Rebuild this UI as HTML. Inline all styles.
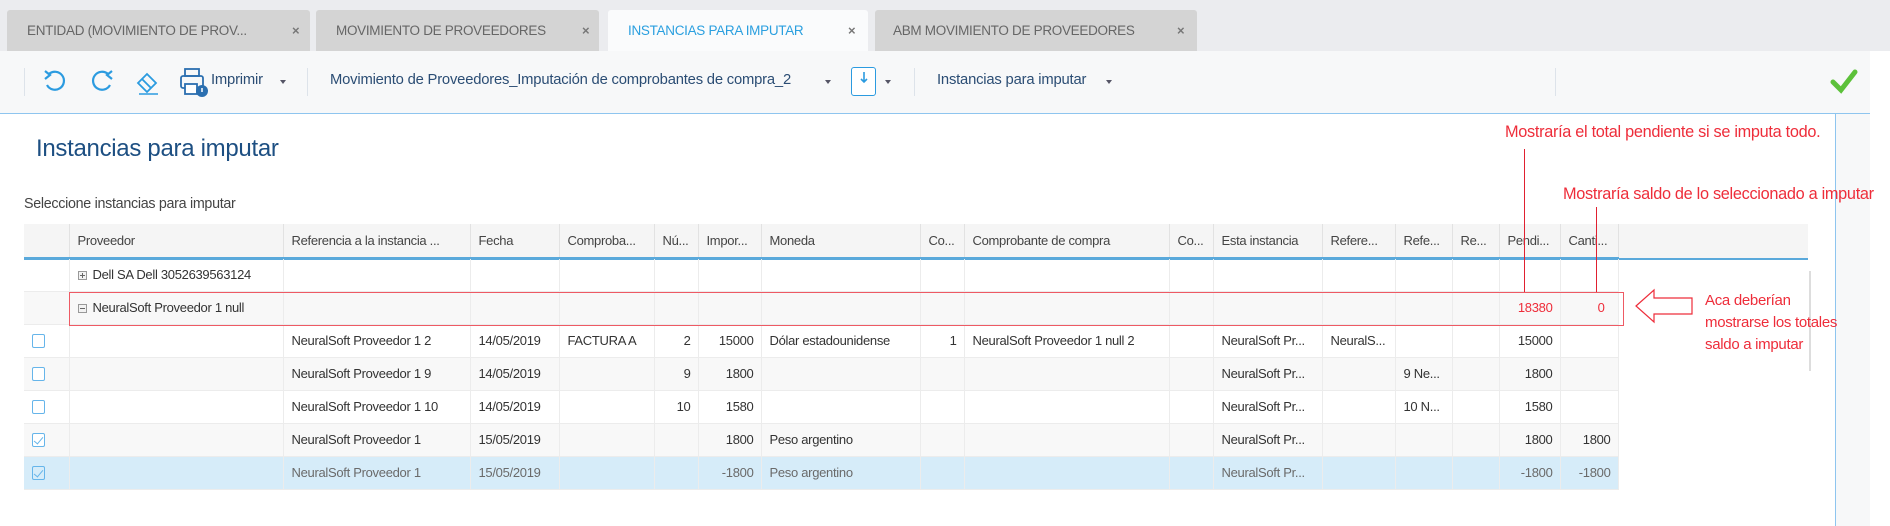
<!DOCTYPE html>
<html><head><meta charset="utf-8"><style>
*{margin:0;padding:0;box-sizing:border-box}
body{width:1890px;height:526px;background:#fff;font-family:"Liberation Sans",sans-serif;position:relative;overflow:hidden;color:#333}
.a{position:absolute;white-space:nowrap}
.tab{position:absolute;top:10px;height:41px;background:#d4d4d4;border-radius:3px 3px 0 0;font-size:13.5px;color:#666;letter-spacing:-0.3px}
.tab span{position:absolute;top:13px}
.x{font-size:13px;font-weight:bold;color:#777}
.sep{position:absolute;top:68px;width:1px;height:28px;background:#dde3ea}
.tb{font-size:14.8px;color:#2b4d74;letter-spacing:-0.2px;top:72px}
.car{position:absolute;top:80px;width:0;height:0;border-left:3.5px solid transparent;border-right:3.5px solid transparent;border-top:4px solid #556}
table{position:absolute;left:24px;top:224px;border-collapse:collapse;table-layout:fixed;width:1594px;font-size:13px;letter-spacing:-0.3px}
td{border-right:1px solid #ececec;border-bottom:1px solid #ececec;height:33px;padding:0 8px;overflow:hidden;white-space:nowrap;text-overflow:ellipsis;color:#333}
thead td{height:34px;background:#f5f5f5;color:#444;border-bottom:2px solid #5aa9db;border-right:1px solid #e2e2e2}
td.r{text-align:right;padding-right:7px}
tr.g td{background:#f8f8f8}
tr.s td{background:#d6ecf9;color:#6a6a6a}
.cb{display:inline-block;width:13px;height:14px;border:1.5px solid #66b5ea;border-radius:2px;vertical-align:middle;position:relative;background:#fff}
tr.s .cb{background:#d6ecf9}
.cb.c::after{content:"";position:absolute;left:3px;top:1px;width:4px;height:8px;border-right:1.5px solid #66b5ea;border-bottom:1.5px solid #66b5ea;transform:rotate(40deg)}
.ex{display:inline-block;width:9px;height:9px;border:1px solid #999;margin-right:6px;position:relative;vertical-align:-1px;background:#f2f2f2}
.ex::before{content:"";position:absolute;left:1px;top:3px;width:5px;height:1px;background:#666}
.ex.p::after{content:"";position:absolute;left:3px;top:1px;width:1px;height:5px;background:#666}
.red{color:#ee2d3a;font-size:16.3px;letter-spacing:-0.3px}
</style></head><body>
<div class="a" style="left:0;top:0;width:1890px;height:51px;background:#ebecef"></div>
<div class="tab" style="left:7px;width:303px"><span style="left:20px">ENTIDAD (MOVIMIENTO DE PROV...</span><span class="x" style="left:285px">×</span></div>
<div class="tab" style="left:316px;width:283px"><span style="left:20px">MOVIMIENTO DE PROVEEDORES</span><span class="x" style="left:266px">×</span></div>
<div class="tab" style="left:608px;width:260px;background:#fafbfc"><span style="left:20px;color:#2a9fdf">INSTANCIAS PARA IMPUTAR</span><span class="x" style="left:240px">×</span></div>
<div class="tab" style="left:875px;width:322px"><span style="left:18px">ABM MOVIMIENTO DE PROVEEDORES</span><span class="x" style="left:302px">×</span></div>
<div class="a" style="left:0;top:51px;width:1870px;height:63px;background:#f7f8f9;border-bottom:1.5px solid #8ec5ef"></div>
<div class="sep" style="left:24px"></div>
<svg class="a" style="left:42px;top:68px" width="26" height="28" viewBox="0 0 26 28"><path d="M7 6 A9 9 0 1 1 5 17" fill="none" stroke="#2b9be0" stroke-width="2.2"/><path d="M3 3 L8 7 L3 11" fill="none" stroke="#2b9be0" stroke-width="2.2"/></svg>
<svg class="a" style="left:89px;top:68px" width="26" height="28" viewBox="0 0 26 28"><path d="M19 6 A9 9 0 1 0 21 17" fill="none" stroke="#2b9be0" stroke-width="2.2"/><path d="M23 3 L18 7 L23 11" fill="none" stroke="#2b9be0" stroke-width="2.2"/></svg>
<svg class="a" style="left:134px;top:68px" width="28" height="28" viewBox="0 0 28 28"><path d="M4 15 L13 6 L22 15 L13 24 Z M8 11 L17 20" fill="none" stroke="#2b9be0" stroke-width="1.8"/><path d="M5 26 H24" stroke="#2b9be0" stroke-width="1.5"/></svg>
<svg class="a" style="left:178px;top:67px" width="32" height="30" viewBox="0 0 32 30"><rect x="7" y="2" width="14" height="7" fill="none" stroke="#2b6fb0" stroke-width="1.8"/><rect x="3" y="9" width="22" height="12" rx="2" fill="none" stroke="#2b6fb0" stroke-width="1.8"/><rect x="7" y="17" width="12" height="10" fill="#fff" stroke="#2b6fb0" stroke-width="1.8"/><circle cx="24" cy="24" r="6" fill="#2b6fb0"/><path d="M24 21 V25" stroke="#fff" stroke-width="1.5"/></svg>
<div class="a tb" style="left:211px">Imprimir</div><div class="car" style="left:280px"></div>
<div class="sep" style="left:307px"></div>
<div class="a tb" style="left:330px">Movimiento de Proveedores_Imputación de comprobantes de compra_2</div><div class="car" style="left:825px"></div>
<div class="a" style="left:851px;top:67px;width:25px;height:29px;border:1.5px solid #2b9be0;border-radius:3px;background:#fff"></div>
<svg class="a" style="left:857px;top:71px" width="14" height="16"><path d="M7 1 V11 M4 8 L7 11 L10 8" fill="none" stroke="#2b9be0" stroke-width="1.6"/></svg>
<div class="car" style="left:885px"></div>
<div class="sep" style="left:914px"></div>
<div class="a tb" style="left:937px">Instancias para imputar</div><div class="car" style="left:1106px"></div>
<div class="sep" style="left:1555px"></div>
<svg class="a" style="left:1830px;top:68px" width="28" height="26"><path d="M3 14 L11 22 L25 4" fill="none" stroke="#5cc13a" stroke-width="5" stroke-linecap="round"/></svg>
<div class="a" style="left:1835px;top:114px;width:1px;height:412px;background:#8ec5ef"></div>
<div class="a" style="left:1836px;top:114px;width:34px;height:412px;background:#f7f8f9"></div>
<div class="a" style="left:36px;top:135px;font-size:24px;color:#1d4f82;letter-spacing:-0.3px">Instancias para imputar</div>
<div class="a" style="left:24px;top:196px;font-size:14.3px;color:#444;letter-spacing:-0.3px">Seleccione instancias para imputar</div>
<div class="a" style="left:24px;top:224px;width:1784px;height:36px;background:#f5f5f5;border-bottom:2px solid #5aa9db"></div>
<div class="a" style="left:1809px;top:271px;width:2px;height:100px;background:#ddd"></div>
<table>
<colgroup><col style="width:45px"><col style="width:214px"><col style="width:187px"><col style="width:89px"><col style="width:95px"><col style="width:44px"><col style="width:63px"><col style="width:159px"><col style="width:44px"><col style="width:205px"><col style="width:44px"><col style="width:109px"><col style="width:73px"><col style="width:57px"><col style="width:47px"><col style="width:61px"><col style="width:58px"></colgroup>
<thead><tr><td></td><td>Proveedor</td><td>Referencia a la instancia ...</td><td>Fecha</td><td>Comproba...</td><td>Nú...</td><td>Impor...</td><td>Moneda</td><td>Co...</td><td>Comprobante de compra</td><td>Co...</td><td>Esta instancia</td><td>Refere...</td><td>Refe...</td><td>Re...</td><td>Pendi...</td><td>Canti...</td></tr></thead>
<tbody>
<tr><td></td><td><span class="ex p"></span>Dell SA Dell 3052639563124</td><td></td><td></td><td></td><td></td><td></td><td></td><td></td><td></td><td></td><td></td><td></td><td></td><td></td><td></td><td></td></tr>
<tr class="g"><td></td><td><span class="ex"></span>NeuralSoft Proveedor 1 null</td><td></td><td></td><td></td><td></td><td></td><td></td><td></td><td></td><td></td><td></td><td></td><td></td><td></td><td class="r" style="color:#ee2d3a">18380</td><td class="r" style="color:#ee2d3a;padding-right:13px">0</td></tr>
<tr><td><span class="cb"></span></td><td></td><td>NeuralSoft Proveedor 1 2</td><td>14/05/2019</td><td>FACTURA A</td><td class="r">2</td><td class="r">15000</td><td>Dólar estadounidense</td><td class="r">1</td><td>NeuralSoft Proveedor 1 null 2</td><td></td><td>NeuralSoft Pr...</td><td>NeuralS...</td><td></td><td></td><td class="r">15000</td><td></td></tr>
<tr class="g"><td><span class="cb"></span></td><td></td><td>NeuralSoft Proveedor 1 9</td><td>14/05/2019</td><td></td><td class="r">9</td><td class="r">1800</td><td></td><td></td><td></td><td></td><td>NeuralSoft Pr...</td><td></td><td>9 Ne...</td><td></td><td class="r">1800</td><td></td></tr>
<tr><td><span class="cb"></span></td><td></td><td>NeuralSoft Proveedor 1 10</td><td>14/05/2019</td><td></td><td class="r">10</td><td class="r">1580</td><td></td><td></td><td></td><td></td><td>NeuralSoft Pr...</td><td></td><td>10 N...</td><td></td><td class="r">1580</td><td></td></tr>
<tr class="g"><td><span class="cb c"></span></td><td></td><td>NeuralSoft Proveedor 1</td><td>15/05/2019</td><td></td><td></td><td class="r">1800</td><td>Peso argentino</td><td></td><td></td><td></td><td>NeuralSoft Pr...</td><td></td><td></td><td></td><td class="r">1800</td><td class="r">1800</td></tr>
<tr class="s"><td><span class="cb c"></span></td><td></td><td>NeuralSoft Proveedor 1</td><td>15/05/2019</td><td></td><td></td><td class="r">-1800</td><td>Peso argentino</td><td></td><td></td><td></td><td>NeuralSoft Pr...</td><td></td><td></td><td></td><td class="r">-1800</td><td class="r">-1800</td></tr>
</tbody></table>
<div class="a" style="left:69px;top:292px;width:1555px;height:34px;border:1.5px solid #ee5a64"></div>
<div class="a red" style="left:1505px;top:123px">Mostraría el total pendiente si se imputa todo.</div>
<div class="a" style="left:1524px;top:149px;width:1px;height:143px;background:#e02030"></div>
<div class="a red" style="left:1563px;top:185px">Mostraría saldo de lo seleccionado a imputar</div>
<div class="a" style="left:1596px;top:207px;width:1px;height:85px;background:#e02030"></div>
<svg class="a" style="left:1634px;top:288px" width="62" height="36"><path d="M2 18 L20 2 V10 H58 V26 H20 V34 Z" fill="#fff" stroke="#ee2d3a" stroke-width="1.2"/></svg>
<div class="a red" style="left:1705px;top:290px;line-height:22px;font-size:15px">Aca deberían<br>mostrarse los totales<br>saldo a imputar</div>
</body></html>
